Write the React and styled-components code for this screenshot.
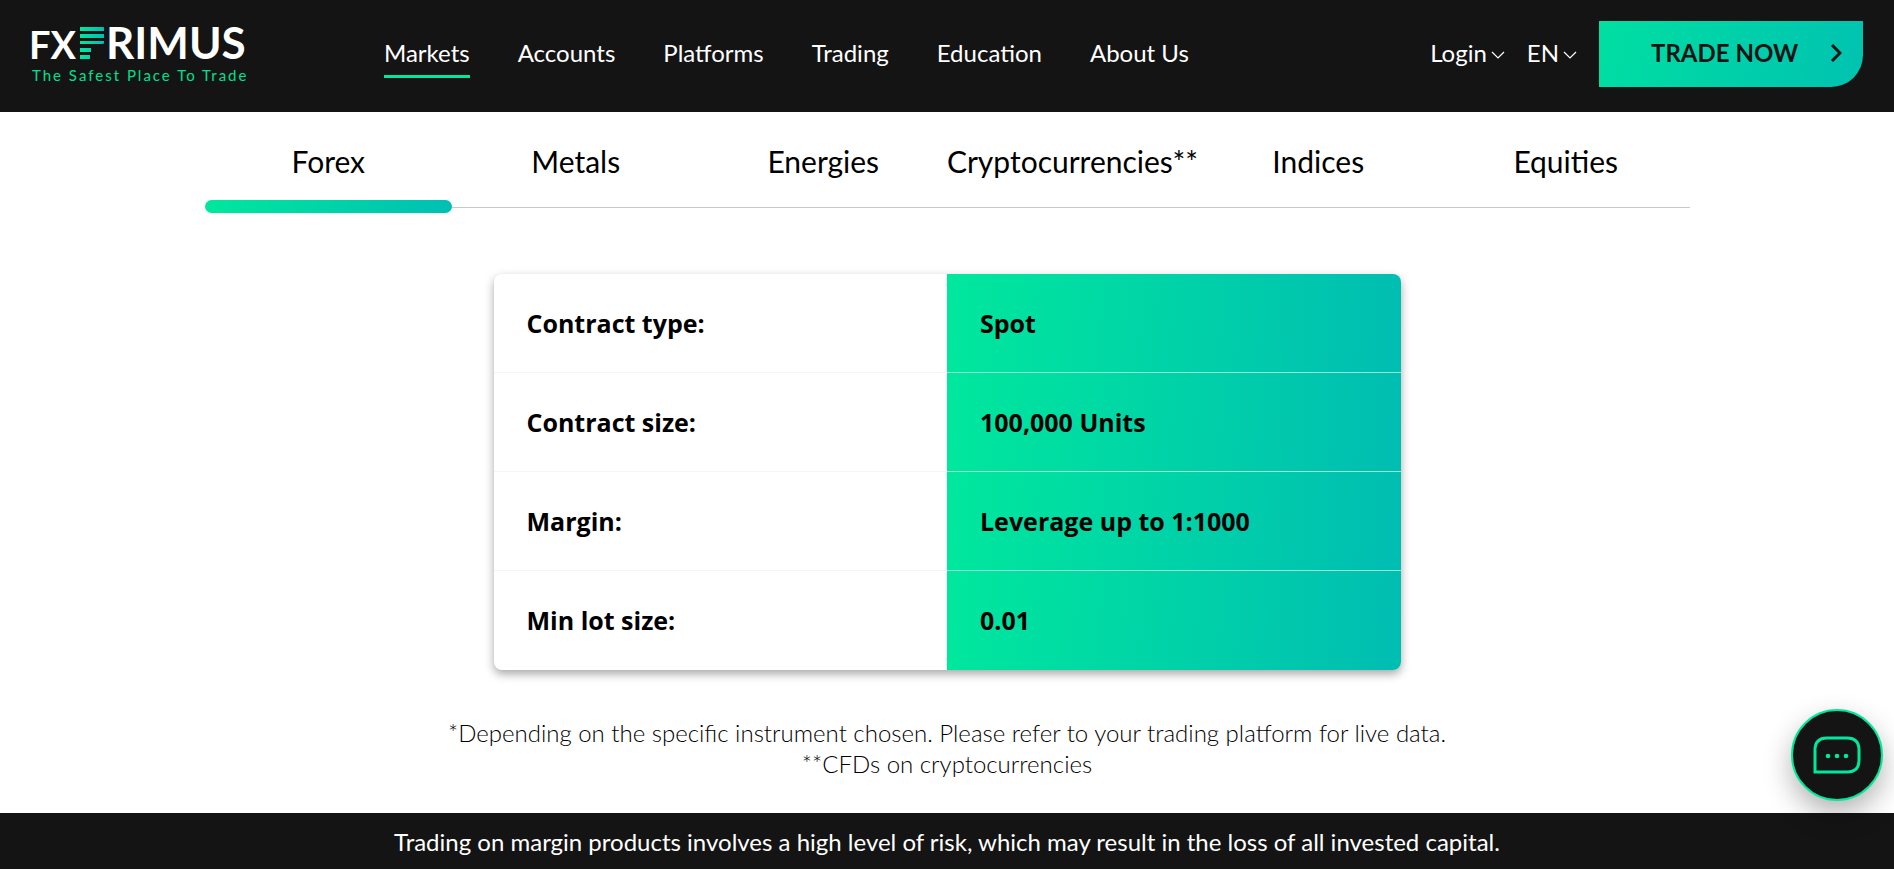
import React from 'react';
import styled, { createGlobalStyle } from 'styled-components';

const GlobalStyle = createGlobalStyle`
  * {
    box-sizing: border-box;
  }

  body {
    margin: 0;
    background-color: white;
    color: black;
    font-family: Lato, 'Open Sans', sans-serif;
    font-size: 24px;
    line-height: 31px;
  }

  button {
    font: inherit;
    color: inherit;
    border: none;
    background: none;
    padding: 0;
    cursor: pointer;
  }
`

const AppContainer = styled.div`
  min-height: 100vh;
  display: flex;
  flex-direction: column;
`

const Header = styled.header`
  min-height: 112px;
  padding: 0 31px 4px 27px;
  display: flex;
  align-items: center;
  background-color: #141414;
  color: white;
`

const LogoLink = styled.a`
  margin-right: 132px;
  display: block;

  svg {
    display: block;
  }
`

const Nav = styled.nav`
  flex-grow: 1;
  display: flex;
  gap: 48px;
`

const NavLink = styled.a`
  padding: 6px 0 7px;
  color: white;
  text-decoration: none;
  white-space: nowrap;
  border-bottom: 3px solid ${(props) => (props.$active ? '#00e89d' : 'transparent')};
`

const HeaderActions = styled.div`
  display: flex;
  align-items: center;
  gap: 22px;
`

const MenuButton = styled.button`
  padding-bottom: 3px;
  display: flex;
  align-items: center;
  gap: 4px;

  svg {
    margin-top: 6px;
  }
`

const TradeButton = styled.button`
  width: 264px;
  height: 66px;
  padding: 0 21px 3px 52px;
  display: flex;
  align-items: center;
  justify-content: space-between;
  border-radius: 0 0 32px 0;
  background: linear-gradient(105deg, #00dfa2, #00c2b1);
  color: #141414;
  font-weight: 700;
`

const Main = styled.main`
  flex-grow: 1;
  padding: 0 32px;
  display: flex;
  flex-direction: column;
  align-items: center;
`

const Tabs = styled.div`
  width: 100%;
  max-width: 1485px;
  display: grid;
  grid-template-columns: repeat(6, minmax(0, 1fr));
`

const Tab = styled.button`
  height: 101px;
  display: flex;
  flex-direction: column;
  justify-content: flex-end;
  gap: 21px;
  font-size: 30px;
  line-height: 36px;
  text-align: center;
  white-space: nowrap;

  &::after {
    content: '';
    height: 13px;
    border-radius: ${(props) => (props.$active ? '7px' : '0')};
    background: ${(props) => (props.$active
      ? 'linear-gradient(105deg, #00e89d, #00bfb3)'
      : 'linear-gradient(#c8c8c8, #c8c8c8) 0 7px / 100% 1px no-repeat')};
  }
`

const ContractTable = styled.table`
  width: 100%;
  max-width: 907px;
  margin-top: 61px;
  table-layout: fixed;
  border-spacing: 0;
  border-radius: 8px;
  overflow: hidden;
  box-shadow: 0 4px 10px rgba(0, 0, 0, 0.35);
  font-family: 'Open Sans', sans-serif;
  font-size: 25px;
  font-weight: 700;

  tr:last-child > * {
    border-bottom: none;
  }
`

const LabelCell = styled.th`
  height: 99px;
  padding: 0 33px;
  text-align: left;
  border-bottom: 1px solid #f5f5f5;
`

const ValueCell = styled.td`
  height: 99px;
  padding: 0 33px;
  border-bottom: 1px solid #92e6d2;
  background: linear-gradient(95deg, #00e89d, #00bdb2);
`

const Notes = styled.p`
  margin: 47px 0 34px;
  font-weight: 300;
  text-align: center;
`

const RiskBar = styled.footer`
  min-height: 57px;
  padding: 13px 32px;
  background-color: #141414;
  color: white;
  text-align: center;
`

const ChatButton = styled.button`
  position: fixed;
  right: 11px;
  bottom: 68px;
  width: 92px;
  height: 92px;
  display: flex;
  align-items: center;
  justify-content: center;
  border: 2px solid #00e89d;
  border-radius: 50%;
  background-color: #141414;
  box-shadow: 0 12px 28px rgba(0, 0, 0, 0.3);
`

const navItems = ['Markets', 'Accounts', 'Platforms', 'Trading', 'Education', 'About Us']

const tabItems = ['Forex', 'Metals', 'Energies', 'Cryptocurrencies**', 'Indices', 'Equities']

const contract = [
  { label: 'Contract type:', value: 'Spot' },
  { label: 'Contract size:', value: '100,000 Units' },
  { label: 'Margin:', value: 'Leverage up to 1:1000' },
  { label: 'Min lot size:', value: '0.01' }
]

const Logo = () => (
  <svg width="225" height="76" viewBox="-4 -10 225 76" fontFamily="Lato, sans-serif">
    <defs>
      <linearGradient id="stripes" gradientUnits="userSpaceOnUse" x1="49" y1="0" x2="73" y2="0">
        <stop offset="0" stopColor="#00e89d" />
        <stop offset="1" stopColor="#00bfb3" />
      </linearGradient>
    </defs>
    <text x="-2" y="33" fontSize="38" fontWeight="700" fill="white">FX</text>
    <g fill="url(#stripes)">
      <path d="M49 1H72Q73 1 73 2V5H49Z" />
      <path d="M49 8H73V12H49Z" />
      <path d="M49 15H73V17Q73 18 71 18H49Z" />
      <path d="M49 22H60V26H49Z" />
      <path d="M49 29H59V33H49Z" />
    </g>
    <text x="75" y="33" fontSize="44" fontWeight="700" fill="white">RIMUS</text>
    <text x="1" y="55" fontSize="15" letterSpacing="2" fill="#00e08f">The Safest Place To Trade</text>
  </svg>
)

const ChevronDown = () => (
  <svg width="14" height="9" viewBox="0 0 14 9" fill="none" stroke="white" strokeWidth="1.2">
    <path d="M1 1L7 7L13 1" />
  </svg>
)

const ChevronRight = () => (
  <svg width="12" height="18" viewBox="0 0 12 18" fill="none" stroke="#141414" strokeWidth="3">
    <path d="M2 1L10 9L2 17" />
  </svg>
)

const ChatIcon = () => (
  <svg width="48" height="38" viewBox="0 0 48 38" fill="none" stroke="#00e89d" strokeWidth="3">
    <path d="M2 36V14Q2 2 14 2H34Q46 2 46 14V24Q46 36 34 36Z" />
    <g fill="#00e89d" stroke="none">
      <circle cx="15" cy="20" r="2.3" />
      <circle cx="24" cy="20" r="2.3" />
      <circle cx="33" cy="20" r="2.3" />
    </g>
  </svg>
)

class App extends React.Component {
  state = {
    activeTab: 'Forex'
  }

  onClickTab = (tab) => {
    this.setState({activeTab: tab})
  }

  render() {
    return (
      <AppContainer>
        <GlobalStyle />

        <Header>
          <LogoLink href="#home">
            <Logo />
          </LogoLink>
          <Nav>
            {navItems.map((item) => {
              return <NavLink key={item} href="#" $active={item === 'Markets'}>{item}</NavLink>
            })}
          </Nav>
          <HeaderActions>
            <MenuButton>Login<ChevronDown /></MenuButton>
            <MenuButton>EN<ChevronDown /></MenuButton>
            <TradeButton>TRADE NOW<ChevronRight /></TradeButton>
          </HeaderActions>
        </Header>

        <Main>
          <Tabs>
            {tabItems.map((item) => {
              return <Tab
                key={item}
                $active={item === this.state.activeTab}
                onClick={() => this.onClickTab(item)}
              >
                {item}
              </Tab>
            })}
          </Tabs>

          <ContractTable>
            <tbody>
              {contract.map((row) => {
                return <tr key={row.label}>
                  <LabelCell scope="row">{row.label}</LabelCell>
                  <ValueCell>{row.value}</ValueCell>
                </tr>
              })}
            </tbody>
          </ContractTable>

          <Notes>
            *Depending on the specific instrument chosen. Please refer to your trading platform for live data.
            <br />
            **CFDs on cryptocurrencies
          </Notes>
        </Main>

        <RiskBar>
          Trading on margin products involves a high level of risk, which may result in the loss of all invested capital.
        </RiskBar>

        <ChatButton aria-label="Chat">
          <ChatIcon />
        </ChatButton>
      </AppContainer>
    );
  }
}

export default App;
